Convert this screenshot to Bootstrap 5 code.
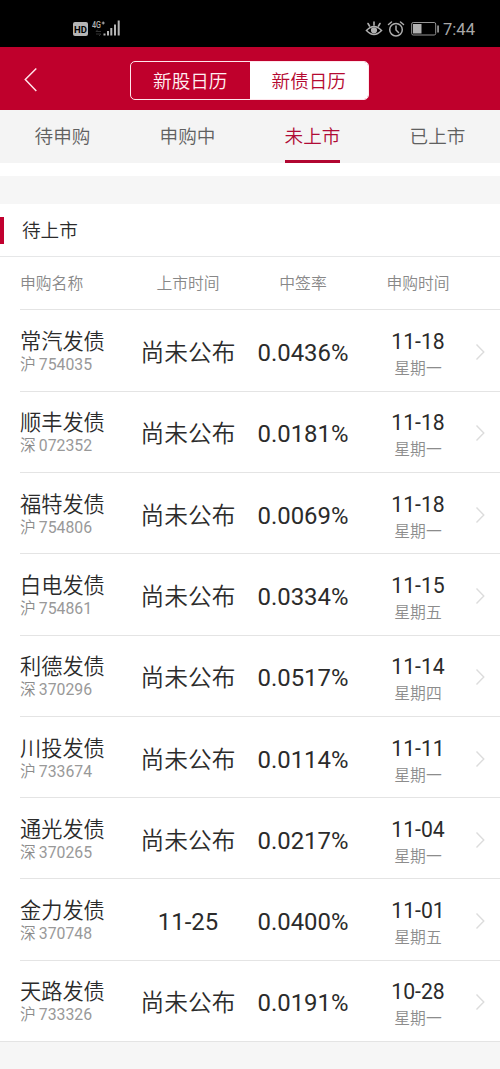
<!DOCTYPE html>
<html lang="zh-CN">
<head>
<meta charset="utf-8">
<meta name="viewport" content="width=device-width, initial-scale=1">
<title>新债日历</title>
<link href="https://cdn.jsdelivr.net/npm/bootstrap@5.3.0/dist/css/bootstrap.min.css" rel="stylesheet">
<style>
  body { font-family: Roboto, "Noto Sans CJK SC DemiLight", "Noto Sans CJK SC Light", "Noto Sans CJK SC", sans-serif; background: #f6f6f6; color: #2b2b2b; overflow: hidden; }
  svg { display: block; flex: none; }
  .statusbar { height: 47px; background: #000; color: #a9a9a9; padding: 10px 25px 0 73px; }
  .clock { font-size: 16.6px; line-height: 24px; margin-left: 3px; padding-top: 2px; color: #a8a8a8; }
  .battery { margin-left: 6px; }
  .appbar { height: 62.5px; background: #bf002c; padding: 4px 0 0 24px; }
  .switcher { width: 239px; height: 39px; margin-left: 92px; border: 1.5px solid #ffe6ec; border-radius: 5px; overflow: hidden; }
  .switcher .btn { font-weight: 300; font-size: 18.6px; line-height: 24px; color: #fff0f3; border: 0; border-radius: 0; padding: 3px 0 0; }
  .switcher .btn.active { background: #fff; color: #b50930; }
  .tabs { height: 53.5px; background: #f4f4f4; font-weight: 300; }
  .tabs .nav-link { height: 53px; padding: 0; font-size: 18.6px; line-height: 54px; color: #606060; }
  .tabs .nav-link.active span { color: #b00b36; box-shadow: inset 0 -3px #b10631; }
  .tabs .nav-link span { display: inline-block; height: 53px; }
  .gap-white { height: 13px; background: #fff; }
  .gap-grey { height: 28px; background: #f6f6f6; }
  .section-title { height: 53px; font-size: 18.6px; font-weight: 300; border-bottom: 1px solid #e6e7e8; }
  .section-title i { width: 4px; height: 27px; background: #c1002f; margin-right: 18px; }
  .section-title span { padding-top: 4px; }
  .line { margin-left: 20px; border-bottom: 1px solid #e4e4e4; }
  .heads { height: 53.4px; font-size: 15.8px; font-weight: 300; color: #888; padding-top: 2px; }
  .bond { height: 81.3px; padding-top: 3px; }
  .bond:last-child { margin-left: 0; padding-left: 20px; }
  .c-name { width: 110.5px; }
  .c-col { width: 115px; text-align: center; }
  .name { font-size: 21.2px; line-height: 26px; font-weight: 300; }
  .sub { font-size: 15.8px; line-height: 20px; font-weight: 300; color: #8c8c8c; }
  .sub b { font-weight: 400; margin-left: 3px; color: #999; }
  .big { font-size: 23.9px; line-height: 30px; padding-top: 2px; }
  .big.pending { font-size: 23.7px; font-weight: 300; }
  .date { font-size: 21.2px; line-height: 27px; padding-top: 6px; }
  .week { font-size: 15.8px; line-height: 27px; font-weight: 300; color: #8c8c8c; }
</style>
</head>
<body>
<header>
  <div class="statusbar d-flex align-items-center justify-content-between">
    <svg width="48" height="20" viewBox="0 0 48 20" fill="#b5b5b5">
      <rect x="0" y="3" width="15" height="14" rx="2"/>
      <text x="7.5" y="13.6" font-family="Roboto" font-size="9.5" font-weight="700" fill="#000" text-anchor="middle">HD</text>
      <text x="19" y="8.5" font-family="Roboto" font-size="8.500" font-weight="500" textLength="9" lengthAdjust="spacingAndGlyphs">4G</text>
      <path d="M28.700 3.500h3v1h-3zM29.700 2.500h1v3h-1z"/>
      <path d="M23 12.500h5M23 12.500l2-2M28 15h-5M28 15l-2 2" stroke="#333" fill="none"/>
      <path d="M30.500 14.500h2v2h-2zM34 12h2v4.500h-2zM37.300 9h2v7.500h-2zM41 5.500h2v11h-2zM44.700 1.500h2v15h-2z"/>
    </svg>
    <div class="d-flex align-items-center">
      <svg width="18" height="18" viewBox="0 0 18 18" fill="none" stroke="#b0b0b0" stroke-width="1.600" stroke-linecap="round">
        <path d="M1.500 10.500Q9 2.500 16.500 10.500Q9 18.500 1.500 10.500zM9 5V2M4.500 6L3 3.500M13.500 6L15 3.500"/>
        <circle cx="9" cy="10.300" r="2.300" fill="#b0b0b0"/>
      </svg>
      <svg class="ms-1" width="18" height="18" viewBox="0 0 18 18" fill="none" stroke="#adadad" stroke-width="1.500" stroke-linecap="round">
        <circle cx="9" cy="9.700" r="6.300"/><path d="M9 6v4l2.500 2.500M1.500 4.500L4.500 2M16.500 4.500L13.500 2"/>
      </svg>
      <svg class="battery" width="29" height="16" viewBox="0 0 29 16">
        <rect x=".7" y="1.500" width="24" height="12.500" rx="1.500" fill="none" stroke="#949494"/>
        <path d="M2 3h8.500v9.500H2z" fill="#b0b0b0"/><path d="M26.300 4.500h1.500v7h-1.500z" fill="#b0b0b0"/>
      </svg>
      <span class="clock">7:44</span>
    </div>
  </div>
  <div class="appbar d-flex align-items-center">
    <svg width="14" height="26" viewBox="0 0 14 26" fill="none" stroke="#ffe3ea" stroke-width="1.500"><path d="M12.300 1.500L1.300 12.500L12.300 24"/></svg>
    <div class="switcher d-flex">
      <button class="btn w-50" type="button">新股日历</button>
      <button class="btn w-50 active" type="button">新债日历</button>
    </div>
  </div>
</header>
<nav class="tabs nav nav-fill flex-nowrap">
  <a class="nav-link col-3" href="#"><span>待申购</span></a>
  <a class="nav-link col-3" href="#"><span>申购中</span></a>
  <a class="nav-link col-3 active" href="#"><span>未上市</span></a>
  <a class="nav-link col-3" href="#"><span>已上市</span></a>
</nav>
<div class="gap-white"></div>
<div class="gap-grey"></div>
<main class="bg-white">
  <div class="section-title d-flex align-items-center"><i></i><span>待上市</span></div>
  <div class="heads line d-flex align-items-center">
    <div class="c-name">申购名称</div>
    <div class="c-col">上市时间</div>
    <div class="c-col">中签率</div>
    <div class="c-col">申购时间</div>
  </div>
  <div id="bonds"></div>
</main>
<script src="https://cdn.jsdelivr.net/npm/bootstrap@5.3.0/dist/js/bootstrap.bundle.min.js"></script>
<script>
  const bonds = [
    ["常汽发债", "沪", "754035", "尚未公布", "0.0436%", "11-18", "星期一"],
    ["顺丰发债", "深", "072352", "尚未公布", "0.0181%", "11-18", "星期一"],
    ["福特发债", "沪", "754806", "尚未公布", "0.0069%", "11-18", "星期一"],
    ["白电发债", "沪", "754861", "尚未公布", "0.0334%", "11-15", "星期五"],
    ["利德发债", "深", "370296", "尚未公布", "0.0517%", "11-14", "星期四"],
    ["川投发债", "沪", "733674", "尚未公布", "0.0114%", "11-11", "星期一"],
    ["通光发债", "深", "370265", "尚未公布", "0.0217%", "11-04", "星期一"],
    ["金力发债", "深", "370748", "11-25", "0.0400%", "11-01", "星期五"],
    ["天路发债", "沪", "733326", "尚未公布", "0.0191%", "10-28", "星期一"]
  ];
  document.getElementById("bonds").innerHTML = bonds.map(([name, market, code, listed, rate, date, week]) => `
    <div class="bond line d-flex align-items-center">
      <div class="c-name"><div class="name">${name}</div><div class="sub">${market}<b>${code}</b></div></div>
      <div class="c-col big ${listed === "尚未公布" ? "pending" : ""}">${listed}</div>
      <div class="c-col big">${rate}</div>
      <div class="c-col"><div class="date">${date}</div><div class="week">${week}</div></div>
      <svg width="10" height="18" viewBox="0 0 10 18" fill="none" stroke="#dcdcdc" stroke-width="1.400"><path d="M.5 1.500L7.800 9L.5 16.500"/></svg>
    </div>`).join("");
</script>
</body>
</html>
